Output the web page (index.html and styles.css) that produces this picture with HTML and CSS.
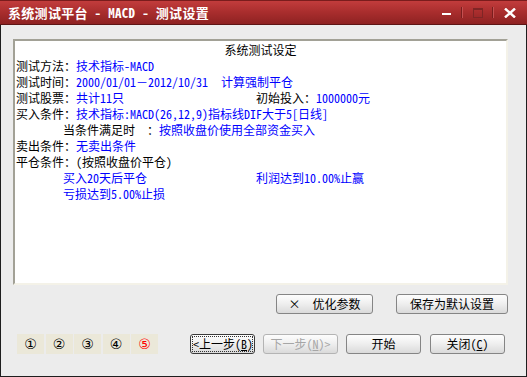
FILE: index.html
```html
<!DOCTYPE html>
<html lang="zh-CN">
<head>
  <meta charset="UTF-8">
  <title>系统测试平台 - MACD - 测试设置</title>
  <link rel="stylesheet" href="styles.css">
</head>
<body>

  <div class="window">
    <!-- Title bar -->
    <div class="titlebar">
      <span class="title">系统测试平台 - MACD - 测试设置</span>
      <div class="controls">
        <span class="ctl-min"></span>
        <span class="ctl-sep"></span>
        <span class="ctl-max"></span>
        <span class="ctl-sep"></span>
        <svg class="ctl-close" width="12" height="10" viewBox="0 0 12 10">
          <path d="M1 0.5 L11 9.5 M11 0.5 L1 9.5" stroke="#fff" stroke-width="2.4"/>
        </svg>
      </div>
    </div>

    <div class="content">
      <!-- Settings summary -->
      <div class="panel">
        <div class="row center">系统测试设定</div>
        <div class="row">测试方法：<span class="val">技术指标-MACD</span></div>
        <div class="row">测试时间：<span class="val">2000/01/01－2012/10/31</span><span class="val gap13">计算强制平仓</span></div>
        <div class="row"><span class="col240">测试股票：<span class="val">共计11只</span></span>初始投入：<span class="val">1000000元</span></div>
        <div class="row">买入条件：<span class="val">技术指标:MACD(26,12,9)指标线DIF大于5[日线]</span></div>
        <div class="row indent">当条件满足时  ：<span class="val">按照收盘价使用全部资金买入</span></div>
        <div class="row">卖出条件：<span class="val">无卖出条件</span></div>
        <div class="row">平仓条件：(按照收盘价平仓)</div>
        <div class="row indent"><span class="val col193">买入20天后平仓</span><span class="val">利润达到10.00%止赢</span></div>
        <div class="row indent"><span class="val">亏损达到5.00%止损</span></div>
      </div>

      <div class="actions">
        <button class="btn w97">×  优化参数</button>
        <button class="btn w112">保存为默认设置</button>
      </div>

      <div class="footer">
        <div class="steps">
          <span class="step">①</span>
          <span class="step">②</span>
          <span class="step">③</span>
          <span class="step">④</span>
          <span class="step current">⑤</span>
        </div>
        <button class="btn w65 default first"><span class="focus">&lt;上一步(<u>B</u>)</span></button>
        <button class="btn w75 disabled">下一步(<u>N</u>)&gt;</button>
        <button class="btn w75">开始</button>
        <button class="btn w75">关闭(<u>C</u>)</button>
      </div>
    </div>
  </div>

</body>
</html>
```

FILE: styles.css
```css
html, body {
  margin: 0;
  padding: 0;
}
body {
  width: 527px;
  height: 377px;
  overflow: hidden;
  font-family: "Noto Sans Mono CJK SC", "Noto Sans CJK SC", sans-serif;
  font-size: 12px;
  color: #000;
  background: #ececec;
}
.window {
  width: 527px;
  height: 377px;
  box-sizing: border-box;
  border: 1px solid #1e1e1e;
  border-top: none;
  background: #ececec;
}
.titlebar {
  height: 25px;
  margin: 0 -1px;
  box-sizing: border-box;
  border-top: 1px solid #7a1c1c;
  border-bottom: 1px solid #5e1515;
  background: linear-gradient(#c23c3c, #a82d2d 50%, #8e2222);
  display: flex;
  align-items: center;
  padding-left: 8px;
  padding-right: 11px;
}
.title {
  color: #fff;
  font-weight: bold;
  font-size: 13px;
  letter-spacing: 0.3px;
  white-space: pre;
  flex: 1;
}
.controls {
  display: flex;
  align-items: center;
}
.ctl-min {
  width: 9px;
  height: 2px;
  background: #fff;
  margin-right: 10px;
  margin-top: 2px;
}
.ctl-sep {
  width: 1px;
  height: 11px;
  background: #7a1e1e;
  border-right: 1px solid #c45050;
}
.ctl-max {
  width: 8px;
  height: 7px;
  border: 1px solid #7f2525;
  border-top-width: 2px;
  margin: 0 9px 0 10px;
}
.ctl-close {
  margin-left: 10px;
}

.content {
  padding: 14px 18px 0 12px;
}
.panel {
  height: 246px;
  box-sizing: border-box;
  background: #fff;
  border: 2px solid #f4f2e8;
  border-top-color: #a2a196;
  border-left-color: #a2a196;
  padding: 1px 1px 0 1px;
}
.row {
  display: flex;
  height: 16px;
  line-height: 16px;
  white-space: pre;
}
.center {
  justify-content: center;
}
.indent {
  padding-left: 47px;
}
.val {
  color: #0000ff;
}
.gap13 {
  margin-left: 13px;
}
.col240 {
  width: 240px;
}
.col193 {
  width: 193px;
}

.actions {
  display: flex;
  justify-content: flex-end;
  gap: 23px;
  margin-top: 9px;
}
.btn {
  height: 20px;
  padding: 0;
  box-sizing: border-box;
  font-family: inherit;
  font-size: 12px;
  color: #000;
  border: 1px solid #858585;
  border-radius: 3px;
  background: linear-gradient(#fdfdfd, #f0f0f0 45%, #dadada);
  white-space: pre;
  line-height: 16px;
}
.btn u {
  text-decoration: underline;
}
.w97 { width: 97px; }
.w112 { width: 112px; }
.w65 { width: 65px; }
.w75 { width: 75px; }

.footer {
  display: flex;
  align-items: center;
  margin-top: 20px;
  margin-right: -7px;
}
.steps {
  display: flex;
  gap: 1.5px;
  margin-left: 4px;
}
.step {
  width: 27px;
  height: 20px;
  line-height: 20px;
  text-align: center;
  background: #ebe8d9;
  font-family: "DejaVu Sans", "Noto Sans CJK SC", sans-serif;
  font-size: 14px;
  color: #000;
}
.step.current {
  color: #ff0000;
}
.first {
  margin-left: 32px;
}
.footer .btn + .btn {
  margin-left: 8px;
}
.footer .btn:last-child {
  margin-left: 9px;
}
.default {
  border: 1px solid #3a3a3a;
  padding: 1px;
}
.focus {
  display: block;
  height: 16px;
  border: 1px dotted #333;
  box-sizing: border-box;
  line-height: 14px;
}
.disabled {
  color: #a6a6a6;
  border-color: #b4b4b4;
}
```
